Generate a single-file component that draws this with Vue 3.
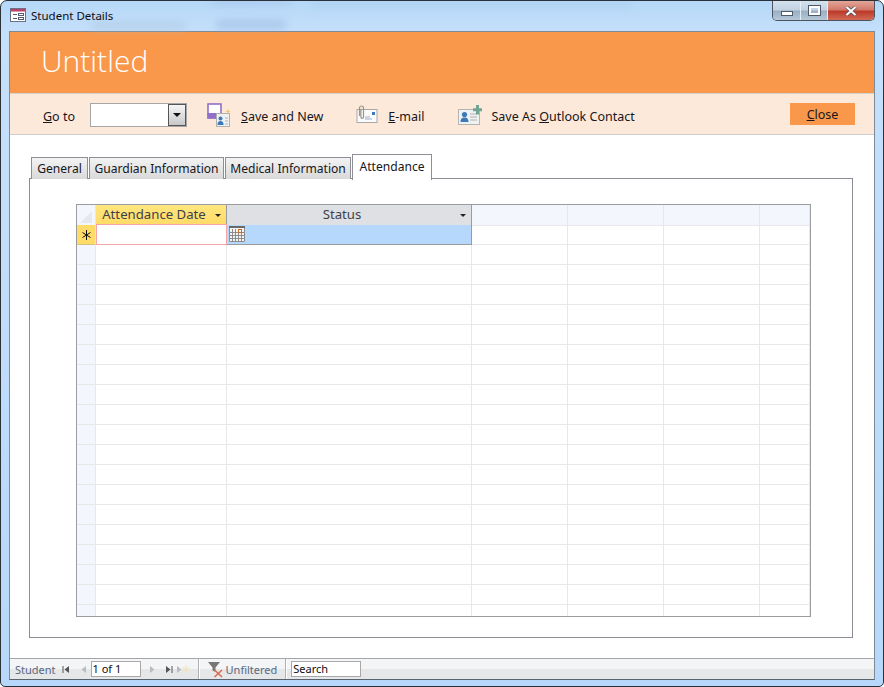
<template>
  <div class="window">
    <span class="smudge s1"></span>
    <span class="smudge s2"></span>
    <span class="smudge s3"></span>
    <span class="smudge s4"></span>

    <div class="titlebar">
      <svg class="app-icon" width="17" height="15" viewBox="0 0 17 15">
        <rect x="0.5" y="0.5" width="15" height="13" fill="#fff" stroke="#6b6f8c" />
        <rect x="1" y="1" width="14" height="2.5" fill="#b8416a" />
        <path d="M3 6.5h4M3 10.5h4" stroke="#555a78" stroke-width="1" />
        <rect x="8.5" y="5.5" width="5" height="2" fill="#fff" stroke="#555a78" />
        <rect x="8.5" y="9.5" width="5" height="2" fill="#fff" stroke="#555a78" />
      </svg>
      <span class="title">Student Details</span>
      <div class="controls">
        <div class="ctl ctl-min"><span class="min-glyph"></span></div>
        <div class="ctl ctl-max"><span class="max-glyph"></span></div>
        <div class="ctl ctl-close">
          <svg width="12" height="10" viewBox="0 0 12 10">
            <path d="M1.5 1L10.5 9M10.5 1L1.5 9" stroke="#4a4a50" stroke-width="3.4" />
            <path d="M1.5 1L10.5 9M10.5 1L1.5 9" stroke="#fff" stroke-width="2.2" />
          </svg>
        </div>
      </div>
    </div>

    <div class="client">
      <div class="banner">Untitled</div>

      <div class="toolbar">
        <span class="tb-label"><u>G</u>o to</span>
        <div class="combo">
          <div class="combo-btn"><span class="caret"></span></div>
        </div>

        <svg class="tb-icon save-icon" width="24" height="25" viewBox="0 0 24 25">
          <rect x="1" y="1" width="13" height="14" fill="#fff" stroke="#9070c8" stroke-width="1.6" />
          <rect x="0.500" y="10" width="14" height="5.500" fill="#9070c8" />
          <rect x="9.500" y="10.500" width="13" height="13" fill="#eef0f1" stroke="#b0b0b0" />
          <circle cx="13.500" cy="15.500" r="2" fill="#3d79b8" />
          <path d="M10.500 22c0-3 1-4 3-4s3 1 3 4z" fill="#3d79b8" />
          <path d="M18 15h3M18 18h3M18 21h3" stroke="#b4b4b4" />
          <path d="M21 6l.8 1.700 1.700.8-1.700.8-.8 1.700-.8-1.700-1.700-.8 1.700-.8z" fill="#f2c56b" />
        </svg>
        <span class="tb-label save-label"><u>S</u>ave and New</span>

        <svg class="tb-icon mail-icon" width="22" height="20" viewBox="0 0 22 20">
          <rect x="1" y="5.500" width="20" height="13" fill="#fbfbfb" stroke="#a9a9a9" />
          <path d="M9 13h5M9 15h7" stroke="#9ab0c8" />
          <rect x="16" y="8" width="3" height="3" fill="#3d79b8" />
          <path d="M3.500 12V4a2 2 0 0 1 4 0v9a1.300 1.300 0 0 1-2.600 0V5" fill="none" stroke="#9c9488" stroke-width="1.200" />
        </svg>
        <span class="tb-label mail-label"><u>E</u>-mail</span>

        <svg class="tb-icon contact-icon" width="24" height="20" viewBox="0 0 24 20">
          <rect x="0.500" y="4.500" width="21" height="15" fill="#eff1f2" stroke="#b4b4b4" />
          <circle cx="6.500" cy="9.500" r="2.600" fill="#3d79b8" />
          <path d="M2.500 17c0-3.400 1.600-4.600 4-4.600s4 1.200 4 4.600z" fill="#3d79b8" />
          <path d="M12 9h7M12 12h7M12 15h7" stroke="#b0b0b0" />
          <path d="M15 3.200h3V0h3v3.200h3v3h-3v3.200h-3V6.200h-3z" fill="#6fa591" />
        </svg>
        <span class="tb-label contact-label">Save As <u>O</u>utlook Contact</span>

        <button class="close-btn" type="button"><u>C</u>lose</button>
      </div>

      <div class="content">
        <div class="tabs">
          <div
            v-for="tab in tabs"
            :key="tab.label"
            class="tab"
            :class="{ active: tab.active }"
            :style="{ width: tab.width + 'px' }"
          >{{ tab.label }}</div>
        </div>

        <div class="panel">
          <div class="sheet">
            <div class="row head">
              <div class="cell sel corner">
                <svg width="18" height="19" viewBox="0 0 18 19"><path d="M3 17L15 5V17z" fill="#e6e8f0" /></svg>
              </div>
              <div class="cell col-active">
                <span class="col-name">Attendance Date</span>
                <span class="arrow"></span>
              </div>
              <div class="cell col-status">
                <span class="col-name">Status</span>
                <span class="arrow"></span>
              </div>
              <div class="cell blank"></div>
              <div class="cell blank"></div>
              <div class="cell blank"></div>
              <div class="cell blank"></div>
            </div>

            <div class="row">
              <div class="cell sel new-sel">
                <svg width="9" height="10" viewBox="0 0 9 10">
                  <path d="M4.500 0v10M0.500 2.500l8 5M8.500 2.500l-8 5" stroke="#111" stroke-width="1" />
                </svg>
              </div>
              <div class="cell date-edit"></div>
              <div class="cell status-cell">
                <svg class="cal" width="16" height="16" viewBox="0 0 16 16">
                  <rect width="16" height="16" fill="#f4f4f4" />
                  <rect x="0" y="0" width="16" height="2" fill="#6a6a6a" />
                  <path d="M0.500 2v13.500h15V2M3.500 3v12M6.500 3v12M9.500 3v12M12.500 3v12M1 6.500h14M1 9.500h14M1 12.500h14" fill="none" stroke="#8c8c8c" />
                  <rect x="9.500" y="3.500" width="3" height="3" fill="#fff" stroke="#d9691e" />
                </svg>
              </div>
              <div class="cell"></div>
              <div class="cell"></div>
              <div class="cell"></div>
              <div class="cell"></div>
            </div>

            <div v-for="n in 19" :key="n" class="row">
              <div class="cell sel"></div>
              <div class="cell"></div>
              <div class="cell"></div>
              <div class="cell"></div>
              <div class="cell"></div>
              <div class="cell"></div>
              <div class="cell"></div>
            </div>
          </div>
        </div>
      </div>

      <div class="statusbar">
        <span class="rec-label">Student</span>
        <svg class="nav first" width="9" height="9" viewBox="0 0 9 9"><path d="M1 1v7" stroke="#555" /><path d="M7 1v7L2.500 4.500z" fill="#555" /></svg>
        <svg class="nav prev" width="7" height="9" viewBox="0 0 7 9"><path d="M6 1v7L1.500 4.500z" fill="#b8bcc0" /></svg>
        <div class="recbox">1 of 1</div>
        <svg class="nav next" width="7" height="9" viewBox="0 0 7 9"><path d="M1 1v7l4.500-3.500z" fill="#b8bcc0" /></svg>
        <svg class="nav last" width="9" height="9" viewBox="0 0 9 9"><path d="M8 1v7" stroke="#555" /><path d="M2 1v7l4.500-3.500z" fill="#555" /></svg>
        <svg class="nav new" width="14" height="9" viewBox="0 0 14 9">
          <path d="M1 1v7l4.500-3.500z" fill="#b8bcc0" />
          <path d="M10 0.500v8M6.500 2.500l7 4M13.500 2.500l-7 4" stroke="#f0e6c0" stroke-width="1.400" />
        </svg>
        <span class="divider first-div"></span>
        <svg class="filter-icon" width="17" height="17" viewBox="0 0 17 17">
          <path d="M1 1h12L8.500 6.500V11L5.500 9.500V6.500z" fill="#777" />
          <path d="M7.500 9L15 16M15 9L7.500 16" stroke="#dc6a50" stroke-width="1.600" />
        </svg>
        <span class="filter-text">Unfiltered</span>
        <span class="divider"></span>
        <div class="searchbox">Search</div>
      </div>
    </div>
  </div>
</template>

<script setup>
const tabs = [
  { label: 'General', width: 57 },
  { label: 'Guardian Information', width: 135 },
  { label: 'Medical Information', width: 126 },
  { label: 'Attendance', width: 80, active: true }
]
</script>

<style>
html,
body {
  margin: 0;
  background: #fff;
}
</style>

<style scoped>
.window {
  position: relative;
  box-sizing: border-box;
  width: 884px;
  height: 687px;
  display: flex;
  flex-direction: column;
  overflow: hidden;
  border: 1px solid #2c3138;
  border-radius: 7px 7px 5px 5px;
  background: linear-gradient(180deg, #b6d8f8 0%, #c6e0fb 5%, #b7d8fa 100%);
  font-family: "Noto Sans", "Open Sans", sans-serif;
  font-size: 13px;
  color: #16161c;
}

.smudge {
  position: absolute;
  border-radius: 4px;
  filter: blur(4px);
  opacity: 0.55;
}

.s1 {
  left: 210px;
  top: -2px;
  width: 80px;
  height: 5px;
  background: #9db7df;
}

.s2 {
  left: 215px;
  top: 20px;
  width: 70px;
  height: 7px;
  background: #8faad8;
}

.s3 {
  left: 90px;
  top: 22px;
  width: 95px;
  height: 6px;
  background: #a3bed4;
}

.s4 {
  left: 310px;
  top: 1px;
  width: 320px;
  height: 5px;
  background: #a6c6e8;
}

.titlebar {
  position: relative;
  height: 30px;
  flex: none;
  display: flex;
  align-items: flex-start;
}

.app-icon {
  margin: 7px 0 0 9px;
}

.title {
  margin: 7px 0 0 4px;
  font-size: 11.5px;
  line-height: 16px;
  color: #0d0d12;
}

.controls {
  margin-left: auto;
  margin-right: 8px;
  display: flex;
  height: 19px;
  border: 1px solid #4c5460;
  border-top: 0;
  border-radius: 0 0 5px 5px;
  overflow: hidden;
}

.ctl {
  display: flex;
  align-items: center;
  justify-content: center;
  height: 19px;
  background: linear-gradient(180deg, #d4e2ee 0%, #c3d3e2 45%, #9bb0c4 55%, #b6c8d8 100%);
}

.ctl-min {
  width: 27px;
  border-right: 1px solid #e4eef7;
}

.ctl-max {
  width: 26px;
  border-right: 1px solid #e4eef7;
}

.ctl-close {
  width: 46px;
  background: linear-gradient(180deg, #e2a69a 0%, #d27a6a 45%, #bd3a2a 55%, #d06a55 100%);
}

.min-glyph {
  width: 10px;
  height: 3px;
  margin-top: 5px;
  background: #fff;
  border: 1px solid #4f5a68;
}

.max-glyph {
  box-sizing: border-box;
  width: 11px;
  height: 9px;
  border: 2px solid #fff;
  outline: 1px solid #4f5a68;
}

.client {
  flex: 1;
  min-height: 0;
  display: flex;
  flex-direction: column;
  margin: 0 8px 6px 8px;
  border: 1px solid #7d8a98;
  border-bottom-color: #59636e;
  background: #fff;
}

.banner {
  flex: none;
  height: 61px;
  padding-left: 31px;
  background: #f9984a;
  color: #fff;
  font-family: "Open Sans", "Noto Sans", sans-serif;
  font-size: 30px;
  font-weight: 300;
  line-height: 58px;
}

.toolbar {
  flex: none;
  box-sizing: border-box;
  height: 42px;
  display: flex;
  align-items: flex-start;
  padding-top: 9px;
  background: #fde9da;
  border-top: 1px solid #d8d2cc;
  border-bottom: 1px solid #cfcfcf;
  font-size: 12.5px;
}

.tb-label {
  margin-top: 5px;
  line-height: 18px;
  white-space: nowrap;
}

.tb-label:first-child {
  margin-left: 33px;
}

.combo {
  box-sizing: border-box;
  width: 97px;
  height: 24px;
  margin-left: 15px;
  display: flex;
  justify-content: flex-end;
  background: #fff;
  border: 1px solid #a6a6a6;
}

.combo-btn {
  box-sizing: border-box;
  width: 18px;
  display: flex;
  align-items: center;
  justify-content: center;
  border: 1px solid #555;
  background: linear-gradient(180deg, #f6f6f6, #c8c8c8);
}

.caret {
  border-left: 4px solid transparent;
  border-right: 4px solid transparent;
  border-top: 4px solid #111;
}

.save-icon {
  margin-left: 20px;
}

.save-label {
  margin-left: 10px;
}

.mail-icon {
  margin-left: 33px;
  margin-top: 1px;
}

.mail-label {
  margin-left: 10px;
}

.contact-icon {
  margin-left: 34px;
  margin-top: 2px;
}

.contact-label {
  margin-left: 9px;
}

.close-btn {
  width: 65px;
  height: 22px;
  margin-left: auto;
  margin-right: 19px;
  padding: 1px 0 0;
  border: 0;
  background: #f9984a;
  font: inherit;
  line-height: 21px;
  color: #16161c;
}

.content {
  flex: 1;
  min-height: 0;
  display: flex;
  flex-direction: column;
  padding: 19px 21px 20px 19px;
}

.tabs {
  flex: none;
  height: 25px;
  display: flex;
  align-items: flex-end;
  gap: 1px;
  padding-left: 2px;
  position: relative;
  z-index: 1;
  margin-bottom: -1px;
  font-size: 12.1px;
}

.tab {
  box-sizing: border-box;
  height: 22px;
  text-align: center;
  line-height: 21px;
  white-space: nowrap;
  border: 1px solid #8e8e96;
  border-bottom: 0;
  background: linear-gradient(180deg, #f3f3f3, #d9d9d9);
}

.tab.active {
  height: 26px;
  line-height: 24px;
  margin-bottom: -1px;
  background: #fff;
}

.panel {
  flex: 1;
  min-height: 0;
  box-sizing: border-box;
  border: 1px solid #8c8c94;
  padding: 25px 41px 20px 46px;
}

.sheet {
  box-sizing: border-box;
  height: 100%;
  overflow: hidden;
  border: 1px solid #9a9ca0;
}

.row {
  display: grid;
  grid-template-columns: 19px 131px 245px 96px 96px 96px 1fr;
  height: 20px;
}

.cell {
  box-sizing: border-box;
  position: relative;
  border-right: 1px solid #e8e8e8;
  border-bottom: 1px solid #e8e8e8;
}

.sel {
  background: #f4f6fd;
  display: flex;
  align-items: center;
  justify-content: center;
}

.head .cell {
  display: flex;
  align-items: center;
  justify-content: center;
}

.head .blank {
  background: #f4f6fd;
}

.col-active,
.col-status {
  padding: 0 14px 2px 0;
  font-size: 13.2px;
  color: #3f3f4a;
}

.col-active {
  background: linear-gradient(180deg, #ffe67e, #ffdb68);
  border-right-color: #9a9ca0 !important;
  border-bottom-color: #9a9ca0 !important;
}

.col-status {
  background: #dee0e3;
  border-right-color: #9a9ca0 !important;
  border-bottom-color: #9a9ca0 !important;
}

.col-name {
  line-height: 18px;
  white-space: nowrap;
}

.arrow {
  position: absolute;
  right: 5px;
  top: 9px;
  border-left: 3px solid transparent;
  border-right: 3px solid transparent;
  border-top: 3px solid #222;
}

.new-sel {
  background: #ffdb68;
  border-bottom-color: #d8c27c;
}

.date-edit {
  height: 21px;
  margin-top: -1px;
  border: 1px solid #f5a5a8;
  background: #fff;
}

.status-cell {
  background: #b5d8fc;
  border-right-color: #9a9ca0;
  border-bottom-color: #9a9ca0;
}

.cal {
  position: absolute;
  left: 2px;
  top: 1px;
}

.statusbar {
  flex: none;
  box-sizing: border-box;
  height: 21px;
  display: flex;
  align-items: center;
  border-top: 1px solid #a4a4ac;
  background: linear-gradient(180deg, #f4f5f7 0%, #f4f5f7 50%, #e6e7e9 50%, #e6e7e9 100%);
  font-size: 11px;
}

.rec-label {
  margin-left: 5px;
  color: #5a6880;
}

.nav {
  flex: none;
}

.first {
  margin-left: 6px;
}

.prev {
  margin-left: 9px;
}

.recbox,
.searchbox {
  box-sizing: border-box;
  height: 16px;
  padding-left: 1px;
  line-height: 14px;
  background: #fff;
  border: 1px solid #a8a8a8;
  color: #0d0d12;
}

.recbox {
  width: 50px;
  margin-left: 4px;
}

.next {
  margin-left: 8px;
}

.last {
  margin-left: 8px;
}

.new {
  margin-left: 3px;
}

.divider {
  width: 1px;
  height: 20px;
  background: #fff;
  border-left: 1px solid #b0b0b6;
}

.first-div {
  margin-left: 8px;
}

.filter-icon {
  margin-left: 7px;
}

.filter-text {
  margin-left: 2px;
  margin-right: 8px;
  color: #5a6880;
}

.searchbox {
  width: 70px;
  margin-left: 4px;
}
</style>
